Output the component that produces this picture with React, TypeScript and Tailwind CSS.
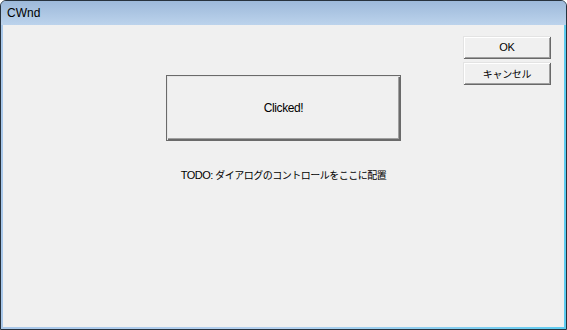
import React from "react";

const latin = { fontFamily: '"Liberation Sans", "Noto Sans CJK JP", sans-serif' };
const jp = { fontFamily: '"Noto Sans CJK JP", "Liberation Sans", sans-serif' };

function ClassicButton({ children, className }: { children: React.ReactNode; className: string }) {
  return (
    <div
      className={
        "flex items-center justify-center bg-[#f0f0f0] text-black shadow-[inset_1px_1px_0_#e3e3e3,inset_-1px_-1px_0_#696969,inset_2px_2px_0_#ffffff,inset_-2px_-2px_0_#a0a0a0] " +
        className
      }
    >
      {children}
    </div>
  );
}

export default function App() {
  return (
    <div className="w-[567px] h-[330px] bg-white">
      <div className="w-[567px] h-[330px] flex flex-col rounded-t-[6px] border border-[#27323d] bg-[#9fc3e8] overflow-hidden">
        <div className="h-[24px] shrink-0 flex items-center pl-[6px] bg-gradient-to-b from-[#9db9da] to-[#bcd3ec]">
          <span className="text-[12px] leading-none text-black" style={latin}>
            CWnd
          </span>
        </div>
        <div className="flex-1 flex flex-col px-[2px] pb-[2px] bg-gradient-to-r from-[#a9c8ea] via-[#b4d0ee] to-[#5ccbf0]">
          <div className="flex-1 bg-[#f0f0f0] flex pt-[11px]">
            <div className="ml-[163px] mt-[39px] flex flex-col items-center">
              <div className="w-[235px] h-[66px] flex items-center justify-center bg-[#f0f0f0] border border-[#6a6a6a] shadow-[inset_1px_1px_0_#e6e6e6,inset_-1px_-1px_0_#6a6a6a,inset_-2px_-2px_0_#a0a0a0]">
                <span className="text-[12px] tracking-[-0.4px] text-black" style={latin}>
                  Clicked!
                </span>
              </div>
              <p className="mt-[27px] text-[10px] leading-[14px] text-black whitespace-nowrap">
                <span className="text-[11px] tracking-[-0.5px]" style={latin}>TODO: </span>
                <span className="tracking-[-0.5px]" style={jp}>ダイアログのコントロールをここに配置</span>
              </p>
            </div>
            <div className="ml-[62px] flex flex-col gap-[3px]">
              <ClassicButton className="w-[88px] h-[23px]">
                <span className="text-[11px] tracking-[-0.3px]" style={latin}>OK</span>
              </ClassicButton>
              <ClassicButton className="w-[88px] h-[23px]">
                <span className="text-[10px] tracking-[-0.3px]" style={jp}>キャンセル</span>
              </ClassicButton>
            </div>
          </div>
        </div>
      </div>
    </div>
  );
}
